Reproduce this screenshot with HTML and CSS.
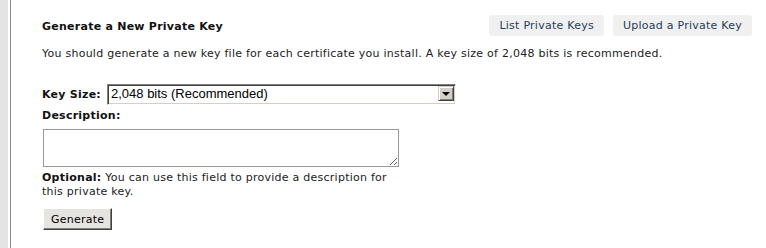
FILE: index.html
```html
<!DOCTYPE html>
<html lang="en">
  <head>
    <meta charset="UTF-8" />
    <meta name="viewport" content="width=device-width, initial-scale=1.0" />
    <title>Generate a New Private Key</title>
    <link rel="stylesheet" href="styles.css">
  </head>
  <body>
    <div class="layout">
      <div class="rail"></div>

      <div class="page">
        <!-- Header with actions -->
        <div class="page-head">
          <h2>Generate a New Private Key</h2>
          <div class="actions">
            <a class="tab-button" href="#">List Private Keys</a>
            <a class="tab-button" href="#">Upload a Private Key</a>
          </div>
        </div>

        <p class="intro">
          You should generate a new key file for each certificate you install. A key size of 2,048 bits is recommended.
        </p>

        <!-- Key form -->
        <div class="field-row">
          <label for="key-size">Key Size:</label>
          <div class="select-box">
            <select id="key-size">
              <option>2,048 bits (Recommended)</option>
              <option>1,024 bits</option>
              <option>4,096 bits</option>
            </select>
            <span class="select-arrow"><span class="arrow"></span></span>
          </div>
        </div>

        <label class="block-label" for="description">Description:</label>
        <textarea id="description"></textarea>

        <p class="note">
          <b>Optional:</b> You can use this field to provide a description for this private key.
        </p>

        <button class="button">Generate</button>
      </div>
    </div>
  </body>
</html>
```

FILE: styles.css
```css
body {
  font-family: "DejaVu Sans", Verdana, sans-serif;
  font-size: 11px;
  line-height: 14px;
  letter-spacing: 0.25px;
  color: #222;
  margin: 0;
  background-color: #fff;
}
.layout {
  display: flex;
  min-height: 248px;
}
.rail {
  width: 8px;
  background-color: #e4e4e4;
  margin-right: 2px;
}
.page {
  flex: 1;
  border-left: 1px solid #8c8c8c;
  padding: 15px 14px 0 31px;
}
.page-head {
  display: flex;
  justify-content: space-between;
  align-items: center;
  height: 21px;
}
.page-head h2 {
  font-size: 11px;
  font-weight: bold;
  color: #111;
  margin: 0;
  padding-top: 2px;
}
.actions {
  display: flex;
  gap: 9px;
}
.tab-button {
  display: block;
  height: 21px;
  line-height: 21px;
  padding: 0 10px;
  background-color: #f0f0f0;
  border-radius: 3px;
  color: #1f3d5c;
  text-decoration: none;
}
.intro {
  margin: 11px 0 23px;
}
.field-row {
  display: flex;
  align-items: center;
  gap: 6px;
}
.field-row label,
.block-label {
  font-weight: bold;
  color: #111;
}
.select-box {
  display: flex;
  width: 345px;
  height: 17px;
  border-top: 1px solid #808080;
  border-left: 1px solid #808080;
  border-bottom: 1px solid #fff;
  border-right: 1px solid #fff;
  box-shadow: inset 1px 1px #404040, inset -1px -1px #d4d0c8;
  padding: 1px;
  background-color: #fff;
}
.select-box select {
  flex: 1;
  appearance: none;
  -webkit-appearance: none;
  border: none;
  outline: none;
  background: transparent;
  font-family: "Liberation Sans", Arial, sans-serif;
  font-size: 13px;
  letter-spacing: 0;
  color: #000;
  padding: 0 0 0 2px;
  margin: 0;
  height: 15px;
  line-height: 15px;
}
.select-arrow {
  display: flex;
  align-items: center;
  justify-content: center;
  width: 14px;
  height: 13px;
  background-color: #d4d0c8;
  border-top: 1px solid #d4d0c8;
  border-left: 1px solid #d4d0c8;
  border-bottom: 1px solid #404040;
  border-right: 1px solid #404040;
  box-shadow: inset 1px 1px #fff, inset -1px -1px #808080;
}
.arrow {
  width: 0;
  height: 0;
  border-left: 4px solid transparent;
  border-right: 4px solid transparent;
  border-top: 4px solid #000;
  margin-top: 1px;
}
.block-label {
  display: block;
  margin-top: 4px;
}
textarea {
  display: block;
  box-sizing: border-box;
  width: 356px;
  height: 38px;
  margin: 6px 0 0 1px;
  border: 1px solid #9a9a9a;
  resize: both;
}
.note {
  width: 360px;
  margin: 4px 0 9px;
}
.note b {
  color: #111;
}
.button {
  font-family: "DejaVu Sans", Verdana, sans-serif;
  font-size: 11px;
  letter-spacing: 0.25px;
  color: #000;
  height: 22px;
  padding: 0 7px;
  margin-left: 1px;
  background-color: #e6e4df;
  border-top: 1px solid #fff;
  border-left: 1px solid #fff;
  border-bottom: 1px solid #404040;
  border-right: 1px solid #404040;
  box-shadow: inset -1px -1px #808080;
  cursor: pointer;
}
```
